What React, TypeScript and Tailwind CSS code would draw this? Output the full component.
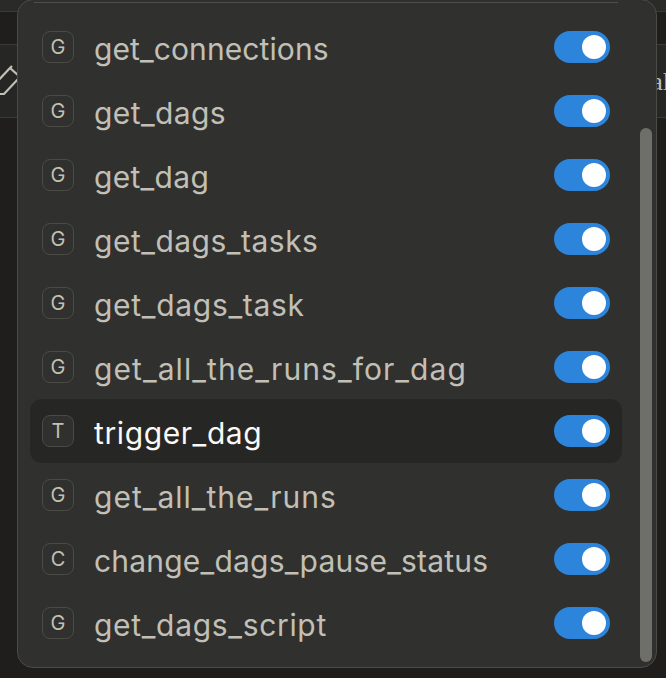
import React from 'react';

const tools = [
  { letter: 'G', name: 'get_connections', tracking: 'tracking-[0.1px]' },
  { letter: 'G', name: 'get_dags', tracking: 'tracking-[0.4px]' },
  { letter: 'G', name: 'get_dag', tracking: 'tracking-[0.3px]' },
  { letter: 'G', name: 'get_dags_tasks', tracking: 'tracking-[0.5px]' },
  { letter: 'G', name: 'get_dags_task', tracking: 'tracking-[0.7px]' },
  { letter: 'G', name: 'get_all_the_runs_for_dag', tracking: 'tracking-[1.07px]' },
  { letter: 'T', name: 'trigger_dag', tracking: 'tracking-[0.6px]', active: true },
  { letter: 'G', name: 'get_all_the_runs', tracking: 'tracking-[1px]' },
  { letter: 'C', name: 'change_dags_pause_status', tracking: 'tracking-[0.2px]' },
  { letter: 'G', name: 'get_dags_script', tracking: 'tracking-[0.68px]' },
];

function Toggle() {
  return (
    <div className="flex h-8 w-14 items-center justify-end rounded-full bg-[#2c84db] pr-1">
      <div className="h-6 w-6 rounded-full bg-white" />
    </div>
  );
}

function ToolRow({ letter, name, tracking, active }: { letter: string; name: string; tracking: string; active?: boolean }) {
  return (
    <div className={`flex h-16 items-center rounded-xl pl-3 pr-3 ${active ? 'bg-[#262624]' : ''}`}>
      <div className={`flex h-8 w-8 shrink-0 items-center justify-center rounded-lg border border-[#4a4a47] text-[20px] leading-none text-[#c2c0b6] ${active ? 'bg-[#30302e]' : ''}`}>
        {letter}
      </div>
      <span className={`ml-5 flex-1 pt-[3px] text-[30px] leading-none ${tracking} ${active ? 'text-[#faf9f5]' : 'text-[#c2c0b6]'}`}>
        {name}
      </span>
      <Toggle />
    </div>
  );
}

export default function App() {
  return (
    <div className="relative h-[678px] w-[666px] overflow-hidden bg-[#1f1e1d] font-['Inter',sans-serif]">
      {/* page behind the popover */}
      <div className="h-[11px] bg-[#2a2a28]" />
      <div className="h-[33px] border-t border-[#3a3a38] bg-[#1f1e1d]" />
      <div className="flex h-[74px] items-center justify-between border-y border-[#3a3a38] bg-[#262624] text-[#c2c0b6]">
        <svg width="24" height="36" viewBox="0 0 24 36" fill="none" stroke="currentColor" strokeWidth="2.2" className="-ml-1">
          <path d="M-4 24 L14 5 L24 14 L8 31 L3 31 Z M11 8 L16 3" />
        </svg>
        <span className="-mr-1 font-['Liberation_Serif',serif] text-[26px]">al</span>
      </div>

      {/* popover */}
      <div className="absolute top-[-1px] left-[17px] h-[669px] w-[640px] rounded-2xl border border-[#4a4a47] bg-[#30302e] pt-[15px] pl-3">
        <div className="absolute top-[2px] left-4 h-px w-[584px] bg-[#4f4f4c]" />
        <div className="w-[592px]">
          {tools.map((tool) => (
            <ToolRow key={tool.name} {...tool} />
          ))}
        </div>
        <div className="absolute top-[128px] right-[4px] h-[534px] w-3 rounded-full bg-[#6f6f69]" />
      </div>
    </div>
  );
}
